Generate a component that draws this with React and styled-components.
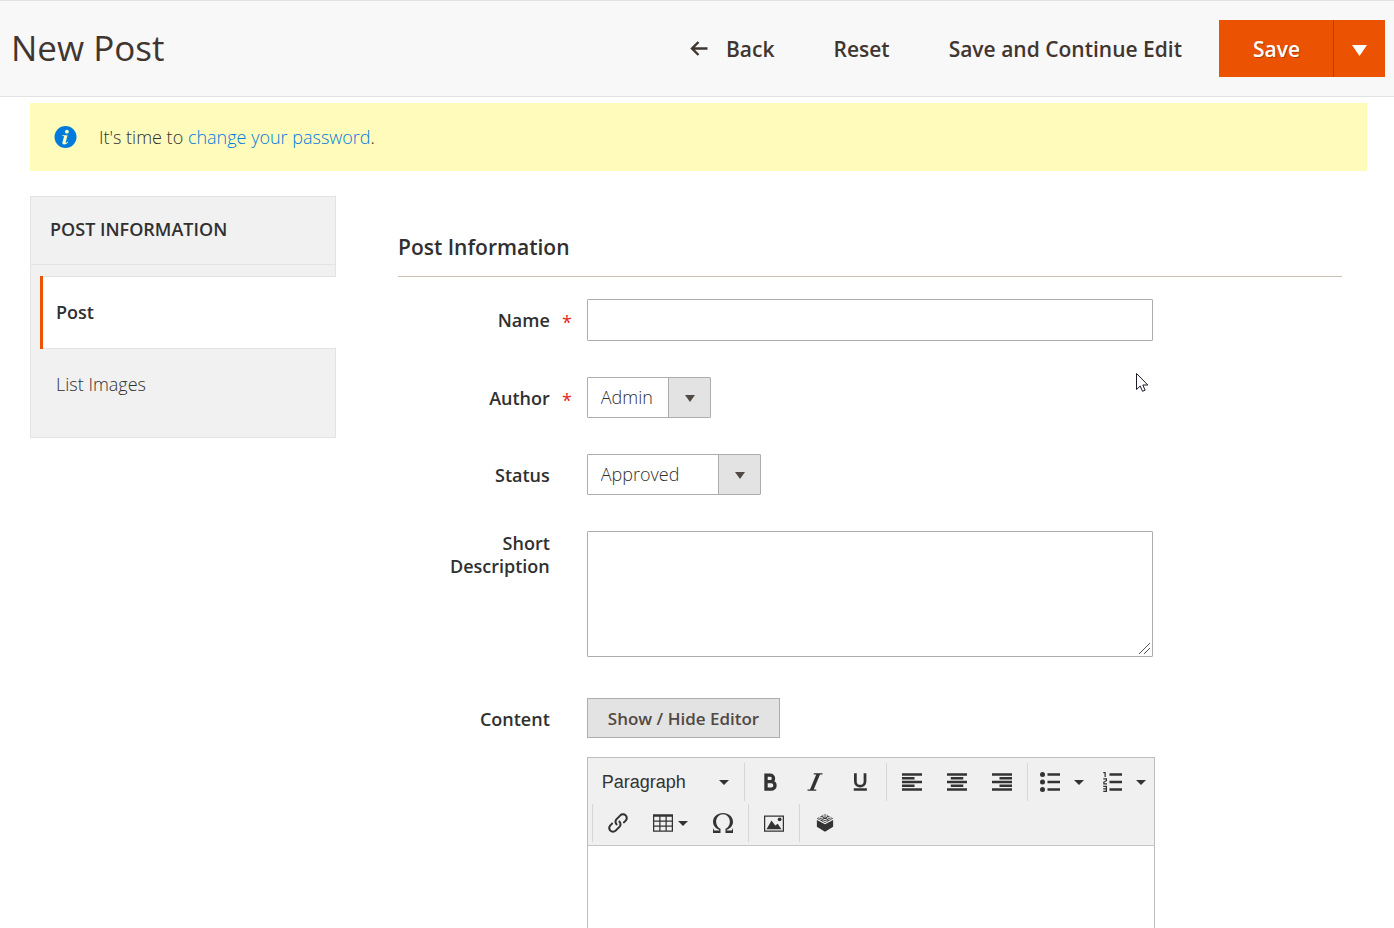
import React from "react";
import styled, { createGlobalStyle } from "styled-components";
import { ImItalic, ImLink, ImListNumbered, ImOmega } from "react-icons/im";

const GlobalStyle = createGlobalStyle`
  * {
    box-sizing: border-box;
  }
  body {
    margin: 0;
    background: #fff;
    color: #303030;
    font-family: "Open Sans", "Noto Sans", sans-serif;
    font-size: 18px;
    font-weight: 300;
    line-height: 23px;
  }
  button, input, select, textarea {
    font: inherit;
    color: inherit;
    margin: 0;
  }
`;

const Page = styled.div`
  display: flex;
  flex-direction: column;
  min-height: 100vh;
`;

const Header = styled.header`
  display: flex;
  align-items: center;
  justify-content: space-between;
  padding: 19px 9px 19px 11px;
  background: #f8f8f8;
  border-top: 1px solid #e3e3e3;
  border-bottom: 1px solid #e3e3e3;
`;

const Title = styled.h1`
  margin: 0;
  padding-bottom: 2px;
  color: #41362f;
  font-size: 35px;
  font-weight: 400;
  line-height: 48px;
`;

const Actions = styled.div`
  display: flex;
  align-items: center;
`;

const ActionButton = styled.button`
  display: flex;
  align-items: center;
  gap: 18px;
  margin-right: 59px;
  padding: 0;
  border: 0;
  background: none;
  color: #41362f;
  font-size: 21px;
  font-weight: 600;
  line-height: 28px;
  cursor: pointer;

  &:last-of-type {
    margin-right: 37px;
  }
`;

const SplitButton = styled.div`
  display: flex;
  height: 57px;
`;

const SaveButton = styled.button`
  width: 114px;
  padding: 1px 0 0 1px;
  border: 0;
  background: #eb5202;
  color: #fff;
  font-size: 21px;
  font-weight: 600;
  text-shadow: 1px 1px 0 rgba(0, 0, 0, 0.25);
  cursor: pointer;
`;

const SaveToggle = styled.button`
  display: flex;
  align-items: center;
  justify-content: center;
  width: 52px;
  padding: 3px 0 0;
  border: 0;
  border-left: 1px solid #b84002;
  background: #eb5202;
  color: #fff;
  cursor: pointer;
`;

const Message = styled.div`
  display: flex;
  align-items: center;
  gap: 22px;
  margin: 6px 27px 25px 30px;
  padding: 22px 24px;
  background: #fffbbb;

  p {
    margin: 0;
    padding-top: 1px;
  }

  a {
    color: #007bdb;
    text-decoration: none;
  }
`;

const Columns = styled.div`
  display: flex;
  flex: 1;
  gap: 62px;
  padding: 0 52px 0 30px;
`;

const Sidebar = styled.nav`
  flex: 0 0 306px;
  align-self: flex-start;
  padding-bottom: 17px;
  background: #f1f1f1;
  border: 1px solid #e3e3e3;
`;

const SidebarTitle = styled.h2`
  margin: 0 0 11px;
  padding: 21px 19px 23px;
  border-bottom: 1px solid #e3e3e3;
  font-size: 18px;
  font-weight: 600;
  line-height: 23px;
  text-transform: uppercase;
`;

const TabLink = styled.a`
  display: block;
  margin: 0 ${(props) => (props.$active ? "-1px" : "0")} 0 9px;
  padding: ${(props) => (props.$active ? 25 : 24)}px 16px;
  box-shadow: ${(props) =>
    props.$active
      ? "inset 3px 0 #eb5202, inset 0 1px #e3e3e3, inset 0 -1px #e3e3e3"
      : "none"};
  background: ${(props) => (props.$active ? "#fff" : "none")};
  color: #303030;
  font-weight: ${(props) => (props.$active ? 600 : 300)};
  text-decoration: none;
`;

const Form = styled.form`
  display: flex;
  flex: 1;
  flex-direction: column;
  gap: 36px;
  min-width: 0;
`;

const Legend = styled.h2`
  margin: 0 0 -14px;
  padding: 37px 0 14px;
  border-bottom: 1px solid #cac3b4;
  font-size: 21px;
  font-weight: 600;
  line-height: 29px;
`;

const FieldRow = styled.div`
  display: grid;
  grid-template-columns: 20% 60%;
  flex: ${(props) => (props.$grow ? "1 0 auto" : "none")};
`;

const Label = styled.label`
  display: flex;
  justify-content: flex-end;
  padding: ${(props) => (props.$top ? 1 : 10)}px 15px 0 36px;
  font-weight: 600;
  text-align: right;

  &::after {
    content: "${(props) => (props.$required ? "*" : "")}";
    flex: 0 0 22px;
    color: #e22626;
    font-weight: 400;
    line-height: 27px;
  }
`;

const TextInput = styled.input`
  width: 100%;
  height: 42px;
  padding: 0 12px;
  border: 1px solid #adadad;
  border-radius: 1px;
  background: #fff;
`;

const TextArea = styled.textarea`
  display: block;
  width: 100%;
  height: 126px;
  margin-bottom: 5px;
  padding: 8px 12px;
  border: 1px solid #adadad;
  border-radius: 1px;
  background: #fff;
  resize: vertical;

  &::-webkit-resizer {
    background: linear-gradient(
        135deg,
        transparent 47%,
        #555 47%,
        #555 53%,
        transparent 53%,
        transparent 70%,
        #555 70%,
        #555 76%,
        transparent 76%
      )
      no-repeat right 2px bottom 2px / 11px 11px;
  }
`;

const SelectBox = styled.div`
  display: grid;
  grid-template-columns: 1fr 43px;
  width: ${(props) => props.$width}px;
  height: 41px;

  select {
    grid-area: 1 / 1 / 2 / 3;
    padding: 0 50px 0 13px;
    border: 1px solid #adadad;
    border-radius: 1px;
    background: #fff;
    appearance: none;
  }
`;

const SelectArrow = styled.span`
  display: flex;
  grid-area: 1 / 2;
  z-index: 1;
  align-items: center;
  justify-content: center;
  margin: 1px 1px 1px 0;
  padding: 2px 0 0 1px;
  border-left: 1px solid #adadad;
  background: #e3e3e3;
  color: #514943;
  pointer-events: none;
`;

const EditorField = styled.div`
  display: flex;
  flex-direction: column;
  align-items: flex-start;
`;

const ToggleButton = styled.button`
  height: 40px;
  margin-bottom: 19px;
  padding: 0 20px;
  border: 1px solid #adadad;
  background: #e3e3e3;
  color: #514943;
  font-size: 17px;
  font-weight: 600;
  cursor: pointer;
`;

const Editor = styled.div`
  display: flex;
  flex: 1;
  flex-direction: column;
  align-self: stretch;
  margin-right: -2px;
  border: solid #bdbdbd;
  border-width: 1px 1px 0;
`;

const Toolbar = styled.div`
  display: grid;
  gap: 3px;
  padding: 5px 0 3px 4px;
  border-bottom: 1px solid #c5c5c5;
  background: #f0f0f0;
`;

const ToolbarRow = styled.div`
  display: flex;
`;

const Group = styled.div`
  display: flex;
  padding: 0 ${(props) => (props.$tight ? 2 : 3)}px 0 3px;
  border-left: 1px solid ${(props) => (props.$first ? "transparent" : "#d6d6d6")};
`;

const ToolButton = styled.button`
  display: flex;
  align-items: center;
  justify-content: ${(props) => (props.$spread ? "space-between" : "center")};
  gap: ${(props) => props.$gap || 5}px;
  width: ${(props) => props.$width || 45}px;
  height: 38px;
  padding: ${(props) => (props.$spread ? "0 12px 0 6px" : "0")};
  border: 0;
  background: none;
  color: #333;
  font-family: "Liberation Sans", Arial, sans-serif;
  font-size: 18px;
  font-weight: 400;
  cursor: pointer;
`;

const EditorBody = styled.textarea`
  flex: 1;
  width: 100%;
  min-height: 80px;
  padding: 10px;
  border: 0;
  outline: 0;
  background: #fff;
  resize: none;
`;

const Pointer = styled.svg`
  position: absolute;
  top: 373px;
  left: 1136px;
  pointer-events: none;
`;

const Caret = ({ width = 10, height = 5 }) => (
  <svg width={width} height={height} viewBox="0 0 10 5" preserveAspectRatio="none" aria-hidden="true">
    <path d="M0 0h10L5 5z" fill="currentColor" />
  </svg>
);

const Icon = ({ children, size = 20 }) => (
  <svg width={size} height={size} viewBox="0 0 16 16" fill="currentColor" aria-hidden="true">
    {children}
  </svg>
);

const ArrowIcon = () => (
  <svg width="18" height="16" viewBox="0 0 18 16" fill="none" stroke="currentColor" strokeWidth="2.4" aria-hidden="true">
    <path d="M17.5 7.5H2M8.5 1L2 7.5 8.5 14" />
  </svg>
);

const InfoIcon = () => (
  <svg width="23" height="23" viewBox="0 0 23 23" aria-hidden="true">
    <circle cx="11.5" cy="11" r="11" fill="#007bdb" />
    <circle cx="12.9" cy="5.7" r="1.9" fill="#fffbbb" />
    <path
      d="M8.4 9.2h5.2l-1.9 6.9c-.2.8.4.8 1 .3l.9-.8.5.6c-1.3 1.5-2.6 2.2-3.9 2.2-1.6 0-2.1-1-1.7-2.5l1.4-5c.2-.6-.1-.8-.7-.8h-1z"
      fill="#fffbbb"
    />
  </svg>
);

// x is the left edge of the two short lines
const AlignIcon = ({ x }) => (
  <Icon>
    <path d={`M0 1h16v2H0zM${x} 4h10v2H${x}zM0 7h16v2H0zM${x} 10h10v2H${x}zM0 13h16v2H0z`} />
  </Icon>
);

const BoldIcon = () => (
  <Icon>
    <path
      d="M4.8 2.5v11.2M4.8 2.5h3.4a2.6 2.6 0 0 1 0 5.2H4.8M8 7.7h1a3 3 0 0 1 0 6H4.8"
      fill="none"
      stroke="currentColor"
      strokeWidth="2.7"
      strokeLinecap="square"
    />
  </Icon>
);

const UnderlineIcon = () => (
  <Icon>
    <path d="M4.3 1v6.5a3.7 3.7 0 0 0 7.7 0V1" fill="none" stroke="currentColor" strokeWidth="2.2" />
    <path d="M3 13h10.5v2H3z" />
  </Icon>
);

const BulletIcon = () => (
  <Icon>
    <circle cx="2" cy="2" r="2" />
    <circle cx="2" cy="8" r="2" />
    <circle cx="2" cy="14" r="2" />
    <path d="M6 1h10v2H6zM6 7h10v2H6zM6 13h10v2H6z" />
  </Icon>
);

const TableIcon = () => (
  <Icon>
    <path d="M0 1v14h16V1zm5 13H1v-3h4zm0-4H1V7h4zm0-4H1V3h4zm5 8H6v-3h4zm0-4H6V7h4zm0-4H6V3h4zm5 8h-4v-3h4zm0-4h-4V7h4zm0-4h-4V3h4z" />
  </Icon>
);

const ImageIcon = () => (
  <Icon>
    <path d="M0 2v13h16V2zm15 12H1V3h14z" />
    <path d="M2 13l4-7 3 4 2-1.5L14 13z" />
    <circle cx="12.5" cy="5" r="1.5" />
  </Icon>
);

const WidgetIcon = () => (
  <Icon>
    <path d="M1.5 5.5L8 9l6.5-3.5V11L8 15l-6.5-4z" />
    <path d="M8 .8l6.5 3.5L8 7.9 1.5 4.3z" />
    <g fill="none" stroke="#f0f0f0" strokeWidth=".8">
      <ellipse cx="8" cy="2.4" rx="1.6" ry=".8" />
      <ellipse cx="4.7" cy="4.2" rx="1.6" ry=".8" />
      <ellipse cx="11.3" cy="4.2" rx="1.6" ry=".8" />
      <ellipse cx="8" cy="6" rx="1.6" ry=".8" />
    </g>
  </Icon>
);

const Select = ({ id, width, options }) => (
  <SelectBox $width={width}>
    <select id={id}>
      {options.map((option) => (
        <option key={option}>{option}</option>
      ))}
    </select>
    <SelectArrow>
      <Caret width={10} height={7} />
    </SelectArrow>
  </SelectBox>
);

const App = () => (
  <>
    <GlobalStyle />
    <Page>
      <Header>
        <Title>New Post</Title>
        <Actions>
          <ActionButton type="button">
            <ArrowIcon />
            Back
          </ActionButton>
          <ActionButton type="button">Reset</ActionButton>
          <ActionButton type="button">Save and Continue Edit</ActionButton>
          <SplitButton>
            <SaveButton type="button">Save</SaveButton>
            <SaveToggle type="button" aria-label="More save options">
              <Caret width={15} height={11} />
            </SaveToggle>
          </SplitButton>
        </Actions>
      </Header>
      <Message>
        <InfoIcon />
        <p>
          It's time to <a href="#password">change your password</a>.
        </p>
      </Message>
      <Columns>
        <Sidebar>
          <SidebarTitle>Post Information</SidebarTitle>
          <TabLink href="#post" $active>
            Post
          </TabLink>
          <TabLink href="#images">List Images</TabLink>
        </Sidebar>
        <Form>
          <Legend>Post Information</Legend>
          <FieldRow>
            <Label htmlFor="name" $required>
              Name
            </Label>
            <TextInput id="name" type="text" />
          </FieldRow>
          <FieldRow>
            <Label htmlFor="author" $required>
              Author
            </Label>
            <Select id="author" width={124} options={["Admin"]} />
          </FieldRow>
          <FieldRow>
            <Label htmlFor="status">Status</Label>
            <Select id="status" width={174} options={["Approved", "Pending", "Disapproved"]} />
          </FieldRow>
          <FieldRow>
            <Label htmlFor="description" $top>
              Short Description
            </Label>
            <TextArea id="description" />
          </FieldRow>
          <FieldRow $grow>
            <Label htmlFor="content">Content</Label>
            <EditorField>
              <ToggleButton type="button">Show / Hide Editor</ToggleButton>
              <Editor>
                <Toolbar>
                  <ToolbarRow>
                    <Group $first>
                      <ToolButton type="button" $width={145} $spread>
                        Paragraph
                        <Caret />
                      </ToolButton>
                    </Group>
                    <Group>
                      <ToolButton type="button" aria-label="Bold">
                        <BoldIcon />
                      </ToolButton>
                      <ToolButton type="button" aria-label="Italic">
                        <ImItalic size={20} />
                      </ToolButton>
                      <ToolButton type="button" aria-label="Underline">
                        <UnderlineIcon />
                      </ToolButton>
                    </Group>
                    <Group $tight>
                      <ToolButton type="button" aria-label="Align left">
                        <AlignIcon x={0} />
                      </ToolButton>
                      <ToolButton type="button" aria-label="Align center">
                        <AlignIcon x={3} />
                      </ToolButton>
                      <ToolButton type="button" aria-label="Align right">
                        <AlignIcon x={6} />
                      </ToolButton>
                    </Group>
                    <Group>
                      <ToolButton type="button" aria-label="Bullet list" $width={62} $gap={14}>
                        <BulletIcon />
                        <Caret />
                      </ToolButton>
                      <ToolButton type="button" aria-label="Numbered list" $width={62} $gap={14}>
                        <ImListNumbered size={20} />
                        <Caret />
                      </ToolButton>
                    </Group>
                  </ToolbarRow>
                  <ToolbarRow>
                    <Group $tight>
                      <ToolButton type="button" aria-label="Link">
                        <ImLink size={20} />
                      </ToolButton>
                      <ToolButton type="button" aria-label="Table" $width={60}>
                        <TableIcon />
                        <Caret />
                      </ToolButton>
                      <ToolButton type="button" aria-label="Special character">
                        <ImOmega size={20} />
                      </ToolButton>
                    </Group>
                    <Group $tight>
                      <ToolButton type="button" aria-label="Image">
                        <ImageIcon />
                      </ToolButton>
                    </Group>
                    <Group $tight>
                      <ToolButton type="button" aria-label="Widget">
                        <WidgetIcon />
                      </ToolButton>
                    </Group>
                  </ToolbarRow>
                </Toolbar>
                <EditorBody id="content" />
              </Editor>
            </EditorField>
          </FieldRow>
        </Form>
      </Columns>
      <Pointer width="13" height="20" viewBox="0 0 13 20" aria-hidden="true">
        <path d="M.5.5v16l3.7-3.5 2.3 5.3 2.6-1.1-2.3-5.2h5z" fill="#fff" stroke="#1b1b2b" />
      </Pointer>
    </Page>
  </>
);

export default App;
